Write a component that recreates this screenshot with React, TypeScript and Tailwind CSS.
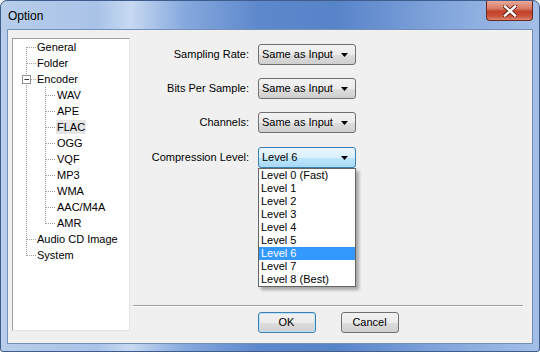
import React from "react";

const rootRows = [
  { label: "General", level: 0 },
  { label: "Folder", level: 0 },
  { label: "Encoder", level: 0 },
  { label: "WAV", level: 1 },
  { label: "APE", level: 1 },
  { label: "FLAC", level: 1, selected: true },
  { label: "OGG", level: 1 },
  { label: "VQF", level: 1 },
  { label: "MP3", level: 1 },
  { label: "WMA", level: 1 },
  { label: "AAC/M4A", level: 1 },
  { label: "AMR", level: 1 },
  { label: "Audio CD Image", level: 0 },
  { label: "System", level: 0 },
];

const levels = [
  "Level 0 (Fast)",
  "Level 1",
  "Level 2",
  "Level 3",
  "Level 4",
  "Level 5",
  "Level 6",
  "Level 7",
  "Level 8 (Best)",
];

function TreeLines() {
  // connector lines for the tree, coordinates inside the panel border
  const dots = { stroke: "#a0a0a0", strokeWidth: 1, strokeDasharray: "1 1" };
  const rowY = (i: number) => 16 * i + 8.5;
  return (
    <svg className="absolute inset-0 pointer-events-none" width="116" height="292">
      <line x1="13.5" y1="8" x2="13.5" y2="217" {...dots} />
      {[0, 1, 12, 13].map((i) => (
        <line key={i} x1="14" y1={rowY(i)} x2="23" y2={rowY(i)} {...dots} />
      ))}
      <line x1="18" y1={rowY(2)} x2="23" y2={rowY(2)} {...dots} />
      <line x1="32.5" y1="48" x2="32.5" y2="185" {...dots} />
      {[3, 4, 5, 6, 7, 8, 9, 10, 11].map((i) => (
        <line key={i} x1="33" y1={rowY(i)} x2="42" y2={rowY(i)} {...dots} />
      ))}
      {/* expand box */}
      <rect x="9.5" y="36.5" width="8" height="8" fill="#fff" stroke="#919191" />
      <line x1="11.5" y1="40.5" x2="16" y2="40.5" stroke="#333" />
    </svg>
  );
}

function Arrow() {
  return (
    <svg width="7" height="4" viewBox="0 0 7 4">
      <path d="M0 0 H7 L3.5 4 Z" fill="#000" />
    </svg>
  );
}

function Combo({ value, active }: { value: string; active?: boolean }) {
  return (
    <div
      className={
        active
          ? "w-[98px] h-[21px] rounded-[3px] border border-[#3c7fb1] bg-[linear-gradient(to_bottom,#eaf6fd_0%,#d9f0fc_50%,#bee6fd_51%,#a7d9f5_100%)] flex items-center pl-[3px] pr-[7px]"
          : "w-[98px] h-[21px] rounded-[3px] border border-[#707070] bg-[linear-gradient(to_bottom,#f2f2f2_0%,#ebebeb_50%,#dddddd_51%,#cfcfcf_100%)] flex items-center pl-[3px] pr-[7px]"
      }
    >
      <span className="flex-1 text-[11px] leading-none text-black">{value}</span>
      <Arrow />
    </div>
  );
}

function FormRow({ label, children }: { label: string; children: React.ReactNode }) {
  return (
    <div className="flex items-center">
      <div className="w-[117px] text-right text-[11px] text-black pr-[1px]">{label}</div>
      <div className="ml-[8px]">{children}</div>
    </div>
  );
}

export default function App() {
  return (
    <div className="w-[540px] h-[352px] font-['Liberation_Sans',Arial,sans-serif] bg-[#f0f0f0]">
      <div className="w-full h-full flex flex-col rounded-t-[7px] rounded-b-[3px] border border-[#3e5d8c] bg-[linear-gradient(to_right,#b7cdea_0%,#a9c3e8_18%,#c7d9f1_24%,#86a9de_34%,#5d88cc_48%,#5783c9_62%,#7ea2da_80%,#a3bfe7_100%)] overflow-hidden">
        {/* title bar */}
        <div className="h-[28px] flex items-start shrink-0">
          <div className="pl-[7px] pt-[8px] text-[12px] leading-[14px] text-black">Option</div>
          <div className="ml-auto mr-[6px] w-[47px] h-[20px] rounded-b-[4px] border border-t-0 border-[#6b2a20] bg-[linear-gradient(to_bottom,#e8a898_0%,#d67a66_40%,#c2412a_55%,#c9543b_80%,#e0866c_100%)] flex items-center justify-center">
            <svg width="14" height="12" viewBox="0 0 14 12">
              <path d="M2 1.5 L12 10.5 M12 1.5 L2 10.5" stroke="#5a1d14" strokeWidth="4" strokeLinecap="square" />
              <path d="M2 1.5 L12 10.5 M12 1.5 L2 10.5" stroke="#ffffff" strokeWidth="2.4" strokeLinecap="square" />
            </svg>
          </div>
        </div>

        {/* client area */}
        <div className="mx-[6px] mb-[7px] flex-1 bg-[#f0f0f0] border border-[#7590b8] flex">
          {/* tree */}
          <div className="relative ml-[4px] mt-[8px] w-[118px] h-[293px] bg-white border-t border-l border-[#a0a0a0] border-r border-r-[#e3e3e3] border-b border-b-[#e3e3e3]">
            <TreeLines />
            <div className="relative flex flex-col">
              {rootRows.map((r) => (
                <div key={r.label} className={r.level === 0 ? "h-[16px] flex items-center pl-[23px]" : "h-[16px] flex items-center pl-[43px]"}>
                  <span
                    className={
                      r.selected
                        ? "px-[1px] h-[14px] flex items-center text-[11px] text-black bg-[#e6e6e6]"
                        : "px-[1px] h-[14px] flex items-center text-[11px] text-black"
                    }
                  >
                    {r.label}
                  </span>
                </div>
              ))}
            </div>
          </div>

          {/* right side */}
          <div className="ml-[3px] w-[390px] flex flex-col">
            <div className="relative mt-[14px] flex flex-col gap-[13px]">
              <FormRow label="Sampling Rate:">
                <Combo value="Same as Input" />
              </FormRow>
              <FormRow label="Bits Per Sample:">
                <Combo value="Same as Input" />
              </FormRow>
              <FormRow label="Channels:">
                <Combo value="Same as Input" />
              </FormRow>
              <div className="mt-[1px]">
                <FormRow label="Compression Level:">
                  <div className="relative">
                    <Combo value="Level 6" active />
                    {/* open drop-down list */}
                    <div className="absolute left-0 top-[21px] w-[98px] z-10 bg-white border border-[#646464] shadow-[3px_3px_3px_rgba(0,0,0,0.3)] flex flex-col">
                      {levels.map((l) => (
                        <div
                          key={l}
                          className={
                            l === "Level 6"
                              ? "h-[13px] flex items-center pl-[2px] text-[11px] text-white bg-[#3399ff]"
                              : "h-[13px] flex items-center pl-[2px] text-[11px] text-black"
                          }
                        >
                          {l}
                        </div>
                      ))}
                    </div>
                  </div>
                </FormRow>
              </div>
            </div>

            {/* separator + buttons */}
            <div className="mt-auto border-t border-[#a0a0a0] h-0 shadow-[0_1px_0_#ffffff]" />
            <div className="mt-[6px] mb-[10px] flex justify-center gap-[25px]">
              <button className="w-[58px] h-[21px] rounded-[3px] border border-[#3c7fb1] bg-[linear-gradient(to_bottom,#f2f2f2_0%,#ebebeb_50%,#dddddd_51%,#cfcfcf_100%)] shadow-[inset_0_0_0_1px_#bfe4fa] text-[11px] text-black">
                OK
              </button>
              <button className="w-[58px] h-[21px] rounded-[3px] border border-[#707070] bg-[linear-gradient(to_bottom,#f2f2f2_0%,#ebebeb_50%,#dddddd_51%,#cfcfcf_100%)] text-[11px] text-black">
                Cancel
              </button>
            </div>
          </div>
        </div>
      </div>
    </div>
  );
}
